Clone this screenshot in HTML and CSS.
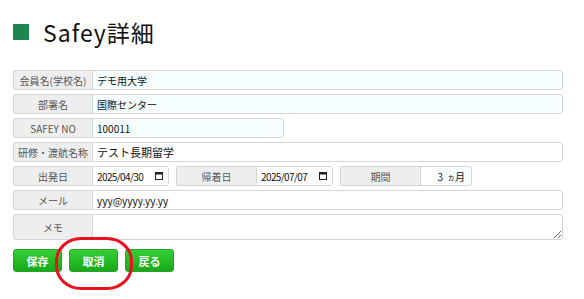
FILE: index.html
```html
<!DOCTYPE html>
<html lang="ja">
<head>
  <meta charset="UTF-8" />
  <meta name="viewport" content="width=device-width, initial-scale=1.0" />
  <title>Safey詳細</title>
  <link rel="stylesheet" href="styles.css">
</head>
<body>
  <div class="page">
    <h1 class="title"><span class="title-mark"></span>Safey詳細</h1>

    <div class="form">
      <div class="row">
        <span class="label">会員名(学校名)</span>
        <input class="field readonly wide" type="text" value="デモ用大学" readonly />
      </div>
      <div class="row">
        <span class="label">部署名</span>
        <input class="field readonly wide" type="text" value="国際センター" readonly />
      </div>
      <div class="row">
        <span class="label">SAFEY NO</span>
        <input class="field readonly no" type="text" value="100011" readonly />
      </div>
      <div class="row">
        <span class="label">研修・渡航名称</span>
        <input class="field wide big" type="text" value="テスト長期留学" />
      </div>
      <div class="row split">
        <div class="group">
          <span class="label">出発日</span>
          <div class="field date">
            <input type="text" value="2025/04/30" />
            <svg class="cal" width="8" height="8" viewBox="0 0 8 8"><rect x="0.5" y="0.5" width="7" height="7" fill="none" stroke="#222" /><rect x="0" y="0" width="8" height="2.5" fill="#222" /></svg>
          </div>
        </div>
        <div class="group">
          <span class="label">帰着日</span>
          <div class="field date">
            <input type="text" value="2025/07/07" />
            <svg class="cal" width="8" height="8" viewBox="0 0 8 8"><rect x="0.5" y="0.5" width="7" height="7" fill="none" stroke="#222" /><rect x="0" y="0" width="8" height="2.5" fill="#222" /></svg>
          </div>
        </div>
        <div class="group">
          <span class="label">期間</span>
          <input class="field months" type="text" value="3" />
          <span class="suffix"><small>ヵ</small>月</span>
        </div>
      </div>
      <div class="row">
        <span class="label">メール</span>
        <input class="field wide" type="text" value="yyy@yyyy.yy.yy" />
      </div>
      <div class="row memo">
        <span class="label">メモ</span>
        <textarea class="field wide"></textarea>
      </div>
    </div>

    <div class="buttons">
      <button class="btn">保存</button>
      <button class="btn">取消</button>
      <button class="btn">戻る</button>
      <span class="highlight"></span>
    </div>
  </div>
</body>
</html>
```

FILE: styles.css
```css
body {
  margin: 0;
  font-family: "Noto Sans CJK JP", "Noto Sans", sans-serif;
  background: #fff;
  color: #222;
}
.page {
  box-sizing: border-box;
  min-height: 100vh;
  padding: 0 21px 0 13px;
}
.title {
  display: flex;
  align-items: center;
  margin: 0;
  padding-top: 14px;
  height: 35px;
  font-size: 23px;
  font-weight: 400;
  letter-spacing: 1px;
  color: #111;
}
.title-mark {
  width: 16px;
  height: 16px;
  background: #1e8550;
  margin-right: 14px;
}
.form {
  margin-top: 21px;
  display: flex;
  flex-direction: column;
  gap: 4px;
}
.row {
  display: flex;
  height: 20px;
}
.row.split {
  gap: 7px;
}
.group {
  display: flex;
}
.label {
  width: 79px;
  box-sizing: border-box;
  display: flex;
  align-items: center;
  justify-content: center;
  background: #eeeeee;
  border: 1px solid #d6d6d6;
  border-right: none;
  border-radius: 3px 0 0 3px;
  font-size: 10px;
  color: #555;
}
.group + .group .label {
  width: 80px;
}
.field {
  box-sizing: border-box;
  height: 100%;
  margin: 0;
  padding: 0 4px;
  border: 1px solid #d6d6d6;
  border-radius: 0 3px 3px 0;
  background: #fff;
  font-family: inherit;
  font-size: 10px;
  color: #111;
  outline: none;
}
.field.readonly {
  background: #f5fdfe;
}
.wide {
  flex: 1;
}
.big {
  font-size: 11px;
}
.no {
  width: 192px;
}
.date {
  width: 77px;
  display: flex;
  align-items: center;
  padding: 0 5px 0 4px;
}
.date input {
  width: 54px;
  flex: 1;
  min-width: 0;
  border: none;
  padding: 0;
  background: transparent;
  font-family: inherit;
  font-size: 10px;
  letter-spacing: -0.6px;
  color: #111;
  outline: none;
}
.cal {
  flex: none;
}
.months {
  width: 25px;
  text-align: right;
  border-right: none;
  border-radius: 0;
  padding-right: 2px;
}
.suffix {
  display: flex;
  align-items: center;
  padding: 0 6px 0 2px;
  background: #f5fdfe;
  border: 1px solid #d6d6d6;
  border-left: none;
  border-radius: 0 3px 3px 0;
  font-size: 10px;
  color: #111;
}
.suffix small {
  font-size: 8px;
}
.memo {
  height: 26px;
}
.memo textarea {
  resize: vertical;
}
.buttons {
  position: relative;
  display: flex;
  gap: 7px;
  margin-top: 9px;
}
.btn {
  width: 49px;
  height: 23px;
  padding: 0;
  border: 1px solid #2a9f2a;
  border-radius: 3px;
  background: linear-gradient(#36cf36, #18a818);
  color: #fff;
  font-family: inherit;
  font-size: 11px;
  font-weight: 700;
  cursor: pointer;
}
.btn:hover {
  background: linear-gradient(#2fbf2f, #129612);
}
.highlight {
  position: absolute;
  left: 42px;
  top: -12px;
  width: 72px;
  height: 47px;
  border: 3px solid #ea1020;
  border-radius: 26px / 24px;
  pointer-events: none;
}
```
